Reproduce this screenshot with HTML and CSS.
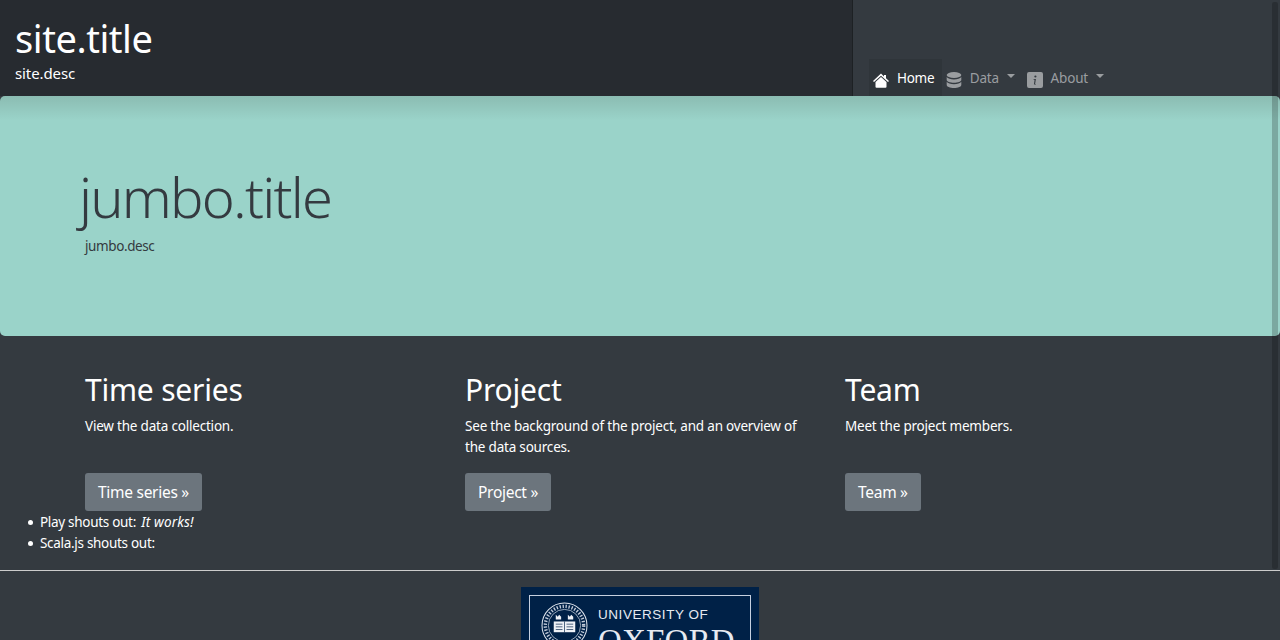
FILE: index.html
```html
<!DOCTYPE html>
<html lang="en">
<head>
<meta charset="utf-8">
<title>site.title</title>
<link rel="stylesheet" href="styles.css">
</head>
<body>
<header class="top">
  <div class="brand">
    <h1 class="site-title">site.title</h1>
    <p class="site-desc">site.desc</p>
  </div>
  <nav class="nav">
    <a class="nav-item active">
      <svg class="ico" viewBox="0 0 16 16"><path d="M8 1.500 0 9l1 1L8 3.700 15 10l1-1-3-2.800V3h-2v1.400z"/><path d="M8 5 2.500 10v4.800q0 1 1 1h9q1 0 1-1V10z"/></svg>
      <span>Home</span>
    </a>
    <a class="nav-item">
      <svg class="ico" viewBox="0 0 16 16"><ellipse cx="8" cy="3" rx="7.300" ry="3"/><path d="M.7 5v3c0 1.500 3.300 2.800 7.300 2.800s7.300-1.300 7.300-2.800V5c-1 1.600-4 2.400-7.300 2.400S1.700 6.600.7 5z"/><path d="M.7 9.800v3.200c0 1.600 3.300 3 7.300 3s7.300-1.400 7.300-3V9.800c-1 1.600-4 2.400-7.300 2.400S1.700 11.400.7 9.800z"/></svg>
      <span>Data</span><i class="caret"></i>
    </a>
    <a class="nav-item">
      <svg class="ico" viewBox="0 0 16 16"><path fill-rule="evenodd" d="M2 0h12a2 2 0 0 1 2 2v12a2 2 0 0 1-2 2H2a2 2 0 0 1-2-2V2a2 2 0 0 1 2-2zm6.400 3.400a1.100 1.100 0 1 0 0 2.200 1.100 1.100 0 0 0 0-2.200zM6.600 7v.7h1L6.900 12.600h2v-.7h-.8L8.900 7z"/></svg>
      <span>About</span><i class="caret"></i>
    </a>
  </nav>
</header>

<section class="jumbo">
  <h2 class="jumbo-title">jumbo.title</h2>
  <p class="jumbo-desc">jumbo.desc</p>
</section>

<main class="cols">
  <article class="col">
    <h3>Time series</h3>
    <p>View the data collection.</p>
    <a class="btn">Time series »</a>
  </article>
  <article class="col">
    <h3>Project</h3>
    <p>See the background of the project, and an overview of the data sources.</p>
    <a class="btn">Project »</a>
  </article>
  <article class="col">
    <h3>Team</h3>
    <p>Meet the project members.</p>
    <a class="btn">Team »</a>
  </article>
</main>

<ul class="shouts">
  <li>Play shouts out: <em>It works!</em></li>
  <li>Scala.js shouts out:</li>
</ul>

<hr class="rule">

<footer class="foot">
  <div class="oxford">
    <div class="oxford-frame">
      <svg class="crest" viewBox="0 0 70 70">
        <circle cx="35" cy="35" r="33.500" fill="none" stroke="#dfe5ee" stroke-width="1.500"/>
        <circle cx="35" cy="35" r="24" fill="none" stroke="#dfe5ee" stroke-width="1"/>
        <circle cx="35" cy="35" r="28.500" fill="none" stroke="#c3ccda" stroke-width="5" stroke-dasharray="2 2.500"/>
        <rect x="19" y="29" width="32" height="16" fill="#eef1f6"/>
        <path d="M35 29v16M22 33h10M22 37h10M22 41h10M38 33h10M38 37h10M38 41h10" stroke="#002147" stroke-width="1"/>
        <path d="M22 26v-7l3 3 2-3 3 3v4zM40 26v-7l3 3 2-3 3 3v4z" fill="#eef1f6"/>
      </svg>
      <div class="oxford-text">
        <span class="oxford-univ">UNIVERSITY OF</span>
        <span class="oxford-name">OXFORD</span>
      </div>
    </div>
  </div>
</footer>

<div class="scrollbar"><div class="thumb"></div></div>
</body>
</html>
```
FILE: styles.css
```css
* { box-sizing: border-box; }
html, body { margin: 0; padding: 0; height: 640px; overflow: hidden; }
body {
  background: #343a40;
  color: #fff;
  font-family: "Noto Sans", "Open Sans", sans-serif;
  font-size: 14px;
  position: relative;
}
.top { display: flex; height: 96px; }
.brand {
  width: 853px;
  background: #272b30;
  border-right: 1px solid #1d2124;
  padding: 14px 15px 0;
}
.site-title { margin: 0 0 1px; font-size: 38px; font-weight: 400; line-height: 48px; letter-spacing: -.44px; }
.site-desc { margin: 0; font-size: 15px; line-height: 20px; letter-spacing: -.1px; }
.nav { display: flex; align-items: flex-end; padding-left: 16px; }
.nav-item {
  display: flex; align-items: center; height: 37px;
  padding: 0 8px 0 4px;
  color: #9a9da0; font-size: 13.500px; letter-spacing: -.15px;
}
.nav-item.active { background: #2f353a; color: #fff; padding-right: 7.500px; letter-spacing: -.3px; }
.ico { width: 16px; height: 16px; margin-right: 8px; margin-top: 4px; fill: currentColor; }
.caret {
  width: 0; height: 0; margin-left: 7.500px; margin-top: -3px;
  border-left: 4px solid transparent; border-right: 4px solid transparent; border-top: 4px solid currentColor;
}
.jumbo {
  height: 240px;
  background: linear-gradient(#8bbcb2, #9ad3c9 24px);
  border-radius: 5px;
  color: #343a40;
  padding: 64px 85px 0;
}
.jumbo-title { margin: 0 0 0 -6px; font-size: 56px; font-weight: 300; line-height: 72px; letter-spacing: -1.800px; }
.jumbo-desc { margin: 4px 0 0; font-size: 13.500px; line-height: 21px; letter-spacing: -.4px; }
.cols { display: flex; padding: 32px 85px 0; height: 175px; }
.col { flex: none; width: 380px; padding-right: 40px; position: relative; }
.col h3 { margin: 0; padding-top: 1px; font-size: 30px; font-weight: 400; line-height: 42px; letter-spacing: -.2px; }
.col p { margin: 5px 0 0; font-size: 13.500px; line-height: 21px; letter-spacing: -.2px; }
.btn {
  position: absolute; left: 0; top: 105px;
  display: block; height: 38px; padding: 0 13px;
  background: #6c757d; border-radius: 3px;
  font-size: 15.500px; line-height: 38px; letter-spacing: -.28px; color: #fff;
}
.shouts { margin: 0; padding: 1px 0 0 40px; list-style: none; font-size: 13.500px; line-height: 21px; letter-spacing: -.3px; height: 48px; }
.shouts li { position: relative; }
.shouts li::before { content: ""; position: absolute; left: -12px; top: 8px; width: 5px; height: 5px; border-radius: 50%; background: #fff; }
.shouts em { margin-left: 2px; letter-spacing: .15px; }
.rule { margin: 11px 0 0; border: 0; border-top: 1px solid #ccc; height: 1px; }
.foot { display: flex; justify-content: center; padding-top: 16px; }
.oxford { width: 238px; height: 200px; background: #002147; padding: 8px; flex: none; }
.oxford-frame { display: flex; height: 180px; border: 1px solid #c6d0e0; padding: 6px 11px; }
.crest { width: 47px; height: 47px; flex: none; }
.oxford-text { display: flex; flex-direction: column; margin-left: 10px; font-family: "Liberation Serif", serif; color: #e6eaf1; }
.oxford-univ { font-family: "Liberation Sans", sans-serif; font-size: 13.500px; letter-spacing: .55px; line-height: 18px; margin-top: 4px; white-space: nowrap; }
.oxford-name { font-size: 33px; line-height: 36px; letter-spacing: .2px; margin-top: -1px; }
.scrollbar { position: absolute; top: 0; right: 0; bottom: 0; width: 8px; }
.thumb { position: absolute; top: 2px; left: 0; right: 2px; height: 567px; background: rgba(0,0,0,.2); border-radius: 2px; }
```
